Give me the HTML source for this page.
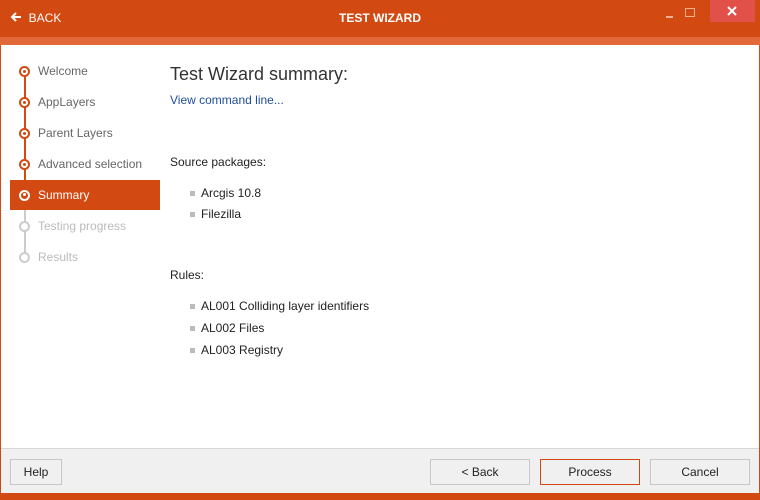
<!DOCTYPE html>
<html><head><style>
*{margin:0;padding:0;box-sizing:border-box}
body{width:760px;height:500px;position:relative;overflow:hidden;font-family:"Segoe UI","Liberation Sans",sans-serif;background:#fff;font-size:12px}
.abs{position:absolute}
.tb{left:0;top:0;width:760px;height:37px;background:#d34912}
.strip{left:0;top:37px;width:760px;height:8px;background:#e2683a}
.side{left:0;top:45px;width:1px;height:450px;background:#d34912}
.sider{right:0;top:45px;width:1px;height:450px;background:#d34912}
.item{left:38px;color:#666;font-size:12px;height:20px;line-height:20px}
.circ{left:19px;width:11px;height:11px;border:2px solid #d34912;border-radius:50%;background:#fff}
.circ::after{content:"";position:absolute;left:2px;top:2px;width:3px;height:3px;background:#d34912;border-radius:50%}
.circ.g{border-color:#ccc}.circ.g::after{display:none}
.btn{top:459px;height:26px;border:1px solid #c8c8c8;background:#f0f0f0;text-align:center;line-height:24px;color:#222}
.bul{width:5px;height:5px;background:#bbb}
.t{color:#222}
</style></head><body>
<div class="abs tb"></div>
<div class="abs strip"></div>
<div class="abs side"></div><div class="abs sider"></div>
<div class="abs" style="left:10px;top:11px;color:#fff;font-size:12px;">
<svg width="12" height="12" style="vertical-align:-1px"><path d="M11 6H2M6 2L2 6L6 10" stroke="#fff" stroke-width="2" fill="none"/></svg>&nbsp; BACK</div>
<div class="abs" style="left:0;width:760px;top:11px;text-align:center;color:#fff;font-weight:bold;font-size:12px">TEST WIZARD</div>
<div class="abs" style="left:666px;top:16px;width:7px;height:2px;background:#f0b090"></div>
<div class="abs" style="left:685px;top:8px;width:10px;height:9px;border:1px solid #f0b090"></div>
<div class="abs" style="left:710px;top:0;width:45px;height:22px;background:#e2504a"></div>
<svg class="abs" style="left:727px;top:6px" width="10" height="10"><path d="M1 1L9 9M9 1L1 9" stroke="#fff" stroke-width="2"/></svg>

<div class="abs" style="left:24px;top:71px;width:2px;height:124px;background:#d34912"></div>
<div class="abs" style="left:24px;top:195px;width:2px;height:62px;background:#ccc"></div>
<div class="abs" style="left:10px;top:180px;width:150px;height:30px;background:#d34912"></div>
<div class="abs circ" style="top:66px"></div><div class="abs item" style="top:61px">Welcome</div>
<div class="abs circ" style="top:97px"></div><div class="abs item" style="top:92px">AppLayers</div>
<div class="abs circ" style="top:128px"></div><div class="abs item" style="top:123px">Parent Layers</div>
<div class="abs circ" style="top:159px"></div><div class="abs item" style="top:154px">Advanced selection</div>
<div class="abs circ" style="top:190px;border-color:#fff;background:#d34912"></div>
<div class="abs" style="left:23px;top:193px;width:3px;height:3px;background:#fff;border-radius:50%"></div>
<div class="abs item" style="top:185px;color:#fff">Summary</div>
<div class="abs circ g" style="top:221px"></div><div class="abs item" style="top:216px;color:#bbb">Testing progress</div>
<div class="abs circ g" style="top:252px"></div><div class="abs item" style="top:247px;color:#bbb">Results</div>

<div class="abs" style="left:170px;top:64px;font-size:18px;color:#333">Test Wizard summary:</div>
<div class="abs" style="left:170px;top:93px;color:#1f4e9a">View command line...</div>
<div class="abs t" style="left:170px;top:155px">Source packages:</div>
<div class="abs bul" style="left:190px;top:191px"></div><div class="abs t" style="left:201px;top:186px">Arcgis 10.8</div>
<div class="abs bul" style="left:190px;top:212px"></div><div class="abs t" style="left:201px;top:207px">Filezilla</div>
<div class="abs t" style="left:170px;top:268px">Rules:</div>
<div class="abs bul" style="left:190px;top:304px"></div><div class="abs t" style="left:201px;top:299px">AL001 Colliding layer identifiers</div>
<div class="abs bul" style="left:190px;top:326px"></div><div class="abs t" style="left:201px;top:321px">AL002 Files</div>
<div class="abs bul" style="left:190px;top:348px"></div><div class="abs t" style="left:201px;top:343px">AL003 Registry</div>

<div class="abs" style="left:1px;top:448px;width:758px;height:45px;background:#f0f0f0;border-top:1px solid #d8d8d8"></div>
<div class="abs" style="left:0;top:493px;width:760px;height:7px;background:#d34912"></div>
<div class="abs btn" style="left:10px;width:52px">Help</div>
<div class="abs btn" style="left:430px;width:100px">&lt; Back</div>
<div class="abs btn" style="left:540px;width:100px;border-color:#d34912">Process</div>
<div class="abs btn" style="left:650px;width:100px">Cancel</div>
</body></html>
